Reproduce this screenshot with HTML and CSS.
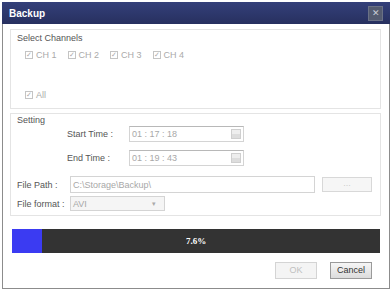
FILE: index.html
```html
<!DOCTYPE html>
<html lang="en">
<head>
  <meta charset="UTF-8">
  <title>Backup</title>
  <link rel="stylesheet" href="styles.css">
</head>
<body>
  <div class="dialog">
    <!-- Title bar -->
    <div class="titlebar">
      <span class="title">Backup</span>
      <span class="close">&#x2715;</span>
    </div>

    <div class="content">
      <!-- Channels -->
      <div class="group channels">
        <div class="group-label">Select Channels</div>
        <div class="check-row">
          <label class="check"><span class="box">&#x2713;</span>CH 1</label>
          <label class="check"><span class="box">&#x2713;</span>CH 2</label>
          <label class="check"><span class="box">&#x2713;</span>CH 3</label>
          <label class="check"><span class="box">&#x2713;</span>CH 4</label>
        </div>
        <div class="check-row all-row">
          <label class="check"><span class="box">&#x2713;</span>All</label>
        </div>
      </div>

      <!-- Setting -->
      <div class="group setting">
        <div class="group-label">Setting</div>
        <div class="row time-row first">
          <span class="label time-label">Start Time :</span>
          <div class="input time-input">01 : 17 : 18<span class="spin"></span></div>
        </div>
        <div class="row time-row second">
          <span class="label time-label">End Time :</span>
          <div class="input time-input">01 : 19 : 43<span class="spin"></span></div>
        </div>
        <div class="row path-row">
          <span class="label file-label">File Path :</span>
          <div class="input path-input">C:\Storage\Backup\</div>
          <div class="browse">...</div>
        </div>
        <div class="row format-row">
          <span class="label file-label">File format :</span>
          <div class="input select">AVI<span class="arrow">&#9662;</span></div>
        </div>
      </div>

      <!-- Progress -->
      <div class="progress">
        <div class="progress-fill" style="width: 8.2%"></div>
        <span class="progress-text">7.6%</span>
      </div>

      <div class="buttons">
        <div class="btn disabled">OK</div>
        <div class="btn">Cancel</div>
      </div>
    </div>
  </div>
</body>
</html>
```

FILE: styles.css
```css
* {
    box-sizing: border-box;
}
body {
    margin: 0;
    background: #ffffff;
    font-family: "Liberation Sans", Arial, sans-serif;
    font-size: 9px;
    color: #555;
}
.dialog {
    margin: 2px 0 0 2px;
    width: 388px;
    height: 287px;
    border: 1px solid #8c8c8c;
    border-top: none;
    background: #fff;
}
.titlebar {
    height: 22px;
    margin: 0 -1px;
    background: linear-gradient(#34407a, #27305f);
    display: flex;
    align-items: center;
    justify-content: space-between;
    padding: 0 7px 0 7px;
}
.title {
    color: #fff;
    font-weight: bold;
    font-size: 10px;
}
.close {
    width: 15px;
    height: 15px;
    background: #545b70;
    border: 1px solid #6a7186;
    color: #c8ccd6;
    font-size: 9px;
    line-height: 13px;
    text-align: center;
}
.content {
    padding: 5px 8px 0 7px;
}
.group {
    border: 1px solid #e4e4e4;
    padding-left: 6px;
}
.group-label {
    height: 11px;
    line-height: 11px;
    color: #555;
}
.channels {
    height: 80px;
    padding-top: 3px;
}
.check-row {
    display: flex;
    margin-top: 5px;
    padding-left: 8px;
    height: 11px;
    align-items: center;
}
.all-row {
    margin-top: 29px;
}
.check {
    display: flex;
    align-items: center;
    color: #aaa;
    margin-right: 11px;
}
.box {
    width: 8px;
    height: 8px;
    border: 1px solid #c4c4c4;
    font-size: 7px;
    line-height: 6px;
    text-align: center;
    color: #aaa;
    margin-right: 3px;
}
.setting {
    height: 103px;
    margin-top: 4px;
    padding-top: 1px;
}
.row {
    display: flex;
    align-items: center;
}
.time-row {
    height: 16px;
    padding-left: 50px;
}
.second {
    margin-top: 8px;
}
.label {
    color: #555;
}
.time-label {
    width: 62px;
}
.file-label {
    width: 53px;
}
.input {
    border: 1px solid #d4d4d4;
    background: #fff;
    color: #a8a8a8;
    height: 100%;
    display: flex;
    align-items: center;
    padding-left: 2px;
}
.time-input {
    width: 115px;
    border-top-color: #b8b8b8;
    position: relative;
}
.spin {
    position: absolute;
    right: 2px;
    top: 2px;
    width: 10px;
    height: 10px;
    border: 1px solid #cfcfcf;
    background: linear-gradient(#eee 50%, #ddd 50%);
}
.path-row {
    height: 17px;
    margin-top: 10px;
}
.path-input {
    width: 245px;
}
.browse {
    width: 50px;
    height: 15px;
    margin-left: 7px;
    border: 1px solid #d8d8d8;
    background: #f6f6f6;
    color: #ccc;
    text-align: center;
    line-height: 11px;
}
.format-row {
    height: 15px;
    margin-top: 3px;
}
.select {
    width: 95px;
    justify-content: space-between;
    padding-right: 8px;
    background: #f5f5f5;
}
.arrow {
    font-size: 7px;
    color: #aaa;
}
.progress {
    position: relative;
    margin: 13px 0 0 2px;
    width: 368px;
    height: 24px;
    background: #333333;
    display: flex;
    align-items: center;
    justify-content: center;
}
.progress-fill {
    position: absolute;
    left: 0;
    top: 0;
    bottom: 0;
    background: #3b3bf2;
}
.progress-text {
    position: relative;
    color: #fff;
    font-weight: bold;
    font-size: 9px;
    font-family: "Liberation Serif", serif;
}
.buttons {
    display: flex;
    justify-content: flex-end;
    gap: 13px;
    margin-top: 9px;
    padding-right: 9px;
}
.btn {
    width: 42px;
    height: 17px;
    border: 1px solid #9a9a9a;
    background: linear-gradient(#f6f6f6, #dcdcdc);
    color: #333;
    text-align: center;
    line-height: 15px;
}
.btn.disabled {
    border-color: #d4d4d4;
    background: #f4f4f4;
    color: #c0c0c0;
}
```
